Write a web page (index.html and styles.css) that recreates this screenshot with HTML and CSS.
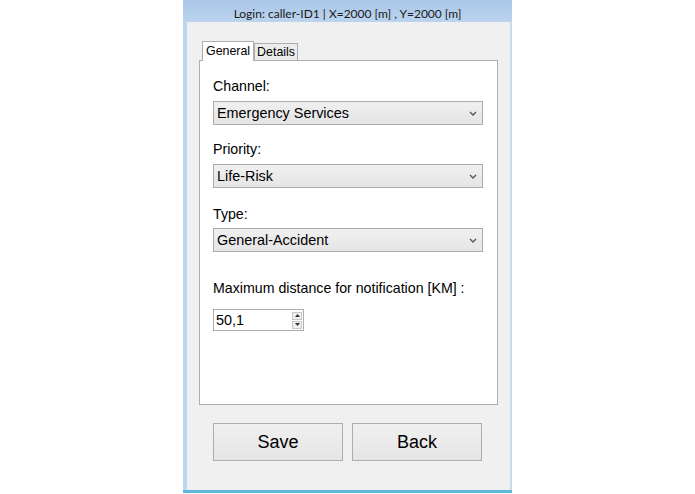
FILE: index.html
```html
<!DOCTYPE html>
<html>
<head>
<meta charset="utf-8">
<link rel="stylesheet" href="styles.css">
</head>
<body>
<div class="window">
  <div class="titlebar">Login: caller-ID1 | X=2000 [m] , Y=2000 [m]</div>
  <div class="client">
    <div class="tabs">
      <div class="tab active">General</div>
      <div class="tab">Details</div>
    </div>
    <div class="panel">
      <div class="label l1">Channel:</div>
      <div class="select"><span>Emergency Services</span><svg class="chev" width="8" height="5" viewBox="0 0 8 5"><path d="M1 1 L4 4 L7 1" fill="none" stroke="#555" stroke-width="1.3"/></svg></div>
      <div class="label l2">Priority:</div>
      <div class="select"><span>Life-Risk</span><svg class="chev" width="8" height="5" viewBox="0 0 8 5"><path d="M1 1 L4 4 L7 1" fill="none" stroke="#555" stroke-width="1.3"/></svg></div>
      <div class="label l3">Type:</div>
      <div class="select"><span>General-Accident</span><svg class="chev" width="8" height="5" viewBox="0 0 8 5"><path d="M1 1 L4 4 L7 1" fill="none" stroke="#555" stroke-width="1.3"/></svg></div>
      <div class="label l4">Maximum distance for notification [KM] :</div>
      <div class="spin">
        <span class="val">50,1</span>
        <div class="arrows">
          <div class="arr"><svg width="5" height="3" viewBox="0 0 5 3"><path d="M0 3 L2.5 0 L5 3 Z" fill="#333"/></svg></div>
          <div class="arr"><svg width="5" height="3" viewBox="0 0 5 3"><path d="M0 0 L2.5 3 L5 0 Z" fill="#333"/></svg></div>
        </div>
      </div>
    </div>
    <div class="buttons">
      <div class="btn">Save</div>
      <div class="btn">Back</div>
    </div>
  </div>
</div>
</body>
</html>
```
FILE: styles.css
```css
html, body { margin: 0; padding: 0; background: #fff; }
body { width: 695px; height: 494px; overflow: hidden; }
.window {
  margin-left: 183px;
  width: 329px;
  height: 490px;
  background: linear-gradient(90deg, #bcd5ee, #c4daf0);
  border-bottom: 3px solid #5fb8dc;
  display: flex;
  flex-direction: column;
  font-family: "Liberation Sans", Arial, sans-serif;
  color: #000;
}
.titlebar {
  height: 18px;
  padding-top: 4px;
  background: linear-gradient(#a9c6e6, #bcd4ee);
  font-family: Lato, "Noto Sans", sans-serif;
  font-size: 12px;
  line-height: 20px;
  text-align: center;
  color: #1a1a1a;
}
.client {
  flex: 1;
  margin: 0 2px 0 4px;
  background: #f0f0f0;
  padding: 19px 0 0 12px;
  display: flex;
  flex-direction: column;
}
.tabs {
  display: flex;
  align-items: flex-end;
  height: 19px;
  padding-left: 3px;
  position: relative;
  z-index: 1;
}
.tab {
  font-size: 12.4px;
  height: 16px;
  line-height: 17px;
  padding: 0 2px 0 2px;
  border: 1px solid #adadad;
  border-bottom: none;
  background: #ececec;
  color: #000;
}
.tab.active {
  height: 19px;
  line-height: 18px;
  padding: 0 3px;
  background: #fff;
  border-color: #adadad;
  margin-bottom: -1px;
}
.panel {
  width: 284px;
  height: 326px;
  background: #fff;
  border: 1px solid #adadad;
  padding: 17px 0 0 13px;
}
.label {
  font-size: 14.2px;
  line-height: 17px;
  margin-bottom: 6px;
}
.l2 { margin-top: 16px; }
.l3 { margin-top: 18px; margin-bottom: 5px; }
.l4 { margin-top: 28px; margin-bottom: 12px; }
.select {
  height: 22px;
  border: 1px solid #acacac;
  background: linear-gradient(#f0f0f0, #e5e5e5);
  display: flex;
  align-items: center;
  justify-content: space-between;
  font-size: 14.4px;
  padding: 0 0 0 3px;
  box-sizing: content-box;
  width: 265px;
}
.chev { margin-right: 5px; margin-top: 1px; }
.spin {
  width: 89px;
  height: 20px;
  border: 1px solid #abadb3;
  display: flex;
  align-items: center;
  justify-content: space-between;
  font-size: 14.4px;
}
.val { padding-left: 2px; }
.arrows {
  display: flex;
  flex-direction: column;
  margin-right: 1px;
  gap: 1px;
}
.arr {
  width: 10px;
  height: 8px;
  border: 1px solid #c8c8c8;
  background: #f0f0f0;
  display: flex;
  align-items: center;
  justify-content: center;
  box-sizing: border-box;
}
.buttons {
  display: flex;
  gap: 9px;
  padding-left: 14px;
  margin-top: 18px;
}
.btn {
  width: 128px;
  height: 36px;
  border: 1px solid #adadad;
  background: linear-gradient(#f0f0f0, #e5e5e5);
  font-size: 18px;
  line-height: 36px;
  text-align: center;
}
```
